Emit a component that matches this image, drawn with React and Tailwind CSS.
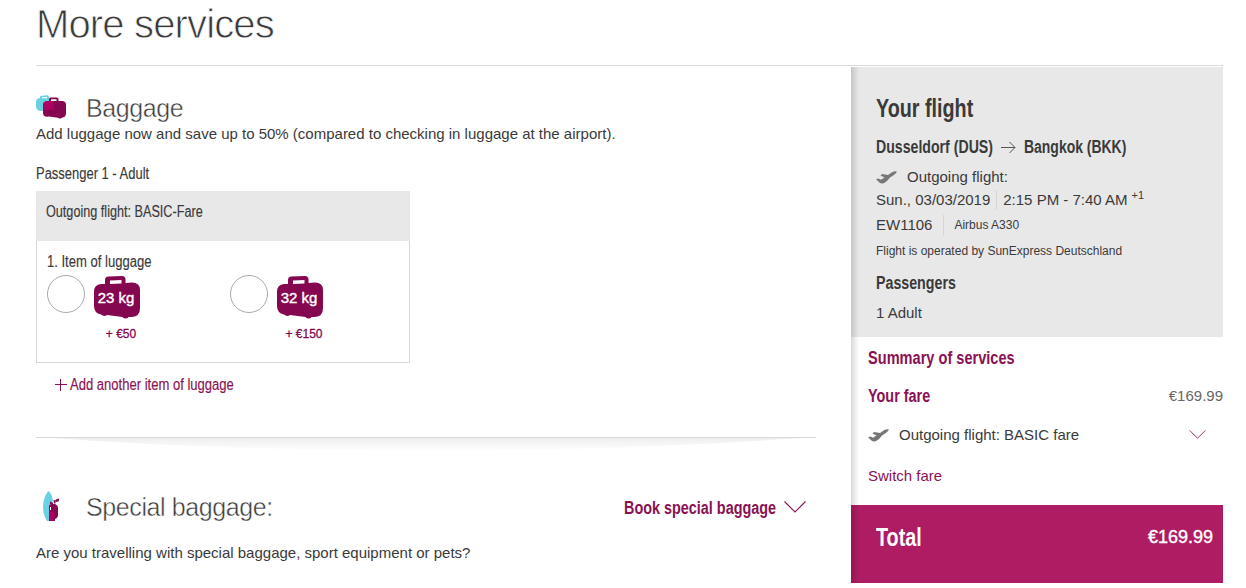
import React from "react";
import clsx from "clsx";

const luggageOptions = [
  { weight: "23 kg", price: "+ €50" },
  { weight: "32 kg", price: "+ €150" },
];

const Condensed = ({ children, className }) => (
  <span
    className={clsx(
      "inline-block whitespace-nowrap",
      className || "origin-left scale-x-[0.79]"
    )}
  >
    {children}
  </span>
);

const Suitcase = ({ className, fill = "#85074f" }) => (
  <svg viewBox="0 0 46 42" className={className} fill={fill}>
    <path
      fillRule="evenodd"
      d="M11 8V4Q11 .5 14.500.5L28 0Q31.500 0 31.500 3.500V7L38 6.500Q46 6.500 46 14V32Q46 40.500 38 41H34.500Q34 42.500 31 42.500Q29 42 28.500 41L13 39Q10 41 7 38.500Q0 37 0 30V16Q0 8.500 7 8ZM16 8L27.500 7.500V4L16 4.500Z"
    />
  </svg>
);

const BaggageIcon = () => (
  <svg width="30" height="25" viewBox="0 0 30 25">
    <path
      fillRule="evenodd"
      fill="#69d2e2"
      d="M4 3V2Q4 .8 5.500.7L11.500.3Q13 .3 13 2V3H15V15L4 16Q0 15 0 11V7Q0 3.500 4 3ZM6 3.200H11V2H6Z"
    />
    <path
      fillRule="evenodd"
      fill="#85074f"
      d="M13 6V4Q13 2.500 14.500 2.500H21Q22.500 2.500 22.500 4V6H26Q30 6 30 10V18Q30 22 26.500 22.500Q24 24.500 22 22.700L13 21.500Q7 22.500 7 18V10Q7 6.500 11 6ZM15 6H20.500V4.200H15Z"
    />
    <path fill="#ad0062" d="M7 10Q7 6.500 11 6H18V14Q13 16 7 15Z" />
  </svg>
);

const SurfIcon = () => (
  <svg width="17" height="31" viewBox="0 0 17 31">
    <path fill="#69d2e2" d="M5.500 0Q10 3 10 14L8 30H4Q0 24 0 15Q1 4 5.500 0Z" />
    <path
      fill="#85074f"
      d="M6 16Q6 13 9 13H12Q15 14 15 17V25Q14 28 12 28V30H6Z"
    />
    <path fill="#ad0062" d="M6 16Q6 14 8 14V20L11 22V30H6Z" />
    <path
      fill="#85074f"
      d="M7 10.500L10 12V13H7ZM10.500 9L12.500 9.500V12.500H11ZM12 9.500L13 8.500L16 7.500V10L13.500 11Z"
    />
    <path stroke="#fff" strokeWidth="1" d="M7.500 16V19" />
  </svg>
);

const Plane = () => (
  <svg width="21" height="13" viewBox="0 0 21 13" fill="#777">
    <path d="M0 8.200L2.500 7.500L5 8.800L8.500 6.500L4.500 4.500L6 3L12 4L16 1.200Q18.500 0 21 .5Q20 2.500 17.500 4.200L14 6.500L11.500 9.500L9 11.500Q6.500 13 4 12Z" />
  </svg>
);

const ChevronDown = ({ className }) => (
  <svg
    viewBox="0 0 22 12"
    className={className}
    fill="none"
    stroke="#8a1253"
    strokeWidth="1.1"
  >
    <path d="M.5.5L11 11L21.500.5" />
  </svg>
);

const SectionTitle = ({ children }) => (
  <h2 className="text-[25px] leading-8 tracking-[-0.4px] [-webkit-text-stroke:0.45px_white]">
    {children}
  </h2>
);

const Baggage = () => (
  <section className="pt-[26px]">
    <div className="flex h-8">
      <div className="w-[50px] pt-[3px]">
        <BaggageIcon />
      </div>
      <SectionTitle>Baggage</SectionTitle>
    </div>
    <p className="leading-5">
      Add luggage now and save up to 50% (compared to checking in luggage at the
      airport).
    </p>
    <h3 className="mt-5 h-5 text-[16px] leading-5 [-webkit-text-stroke:0.15px]">
      <Condensed className="origin-left scale-x-[0.81]">
        Passenger 1 - Adult
      </Condensed>
    </h3>
    <div className="mt-[7px] h-[172px] w-[374px] border border-[#d9d9d9]">
      <div className="-mx-px -mt-px h-[50px] bg-[#e8e8e8] px-[10px] pt-[11px] text-[16px] leading-5 [-webkit-text-stroke:0.15px]">
        <Condensed>Outgoing flight: BASIC-Fare</Condensed>
      </div>
      <div className="px-[10px] pt-[11px]">
        <p className="h-5 text-[16px] leading-5 [-webkit-text-stroke:0.15px]">
          <Condensed className="origin-left scale-x-[0.815]">
            1. Item of luggage
          </Condensed>
        </p>
        <div className="mt-[3px] flex">
          {luggageOptions.map((option) => (
            <label key={option.weight} className="flex w-[183px] shrink-0">
              <span className="size-[38px] rounded-full border border-[#aaa]" />
              <span className="ml-[9px] flex w-[46px] flex-col items-center">
                <span className="relative mt-px h-[42px] w-[46px]">
                  <Suitcase className="h-[42px] w-[46px] overflow-visible" />
                  <span className="absolute top-3 right-0 left-[-2px] text-center leading-5 text-white [-webkit-text-stroke:0.4px]">
                    {option.weight}
                  </span>
                </span>
                <span className="mt-2 ml-2 text-[12px] leading-4 whitespace-nowrap text-[#85074f] [-webkit-text-stroke:0.3px]">
                  {option.price}
                </span>
              </span>
            </label>
          ))}
        </div>
      </div>
    </div>
    <button className="mt-3 ml-[19px] flex h-5 items-center text-[16px] leading-5 text-[#8a1253] [-webkit-text-stroke:0.15px]">
      <svg width="12" height="12" className="mr-[3px]" stroke="#8a1253">
        <path d="M0 5.500H12M5.500 0V12" />
      </svg>
      <Condensed className="origin-left scale-x-[0.815]">
        Add another item of luggage
      </Condensed>
    </button>
  </section>
);

const SpecialBaggage = () => (
  <section>
    <svg width="780" height="14" className="mt-[42px] block">
      <defs>
        <linearGradient id="fade" x1="0" y1="0" x2="0" y2="1">
          <stop offset="0" stopColor="#ededed" />
          <stop offset="1" stopColor="#fff" />
        </linearGradient>
      </defs>
      <path d="M0 0Q390 28 780 0Z" fill="url(#fade)" />
      <rect width="780" height="1" fill="#d9d9d9" />
    </svg>
    <div className="mt-[40px] flex h-8">
      <div className="w-[50px] pl-[7px]">
        <SurfIcon />
      </div>
      <SectionTitle>Special baggage:</SectionTitle>
      <button className="mr-[10px] ml-auto flex h-8 items-center text-[18px] font-bold text-[#8a1253]">
        <Condensed className="origin-right scale-x-[0.8] pt-[2px]">
          Book special baggage
        </Condensed>
        <ChevronDown className="ml-2 h-3 w-[22px]" />
      </button>
    </div>
    <p className="mt-5 leading-5">
      Are you travelling with special baggage, sport equipment or pets?
    </p>
  </section>
);

const FlightSummary = () => (
  <aside className="relative mt-px h-[516px] w-[372px]">
    <div className="h-[270px] bg-[#e8e8e8] px-[25px] pt-[27px]">
      <h2 className="h-7 text-[25px] leading-7 font-bold">
        <Condensed>Your flight</Condensed>
      </h2>
      <div className="mt-[15px] flex h-5 items-center text-[18px] leading-5 font-bold">
        <span className="w-[117px]">
          <Condensed className="origin-left scale-x-[0.785]">
            Dusseldorf (DUS)
          </Condensed>
        </span>
        <svg
          width="15"
          height="13"
          className="mx-2"
          fill="none"
          stroke="#555"
          strokeWidth="1"
        >
          <path d="M0 6.500H14M8.500 1L14 6.500L8.500 12" />
        </svg>
        <Condensed className="origin-left scale-x-[0.775]">
          Bangkok (BKK)
        </Condensed>
      </div>
      <div className="mt-[10px] flex items-center leading-5">
        <span className="mr-[10px]">
          <Plane />
        </span>
        Outgoing flight:
      </div>
      <div className="mt-[3px] flex leading-5">
        Sun., 03/03/2019
        <span className="mr-[6px] ml-[6px] w-px bg-[#d6d6d6]" />
        2:15 PM - 7:40 AM
        <span className="ml-1 text-[11px] leading-[11px]">+1</span>
      </div>
      <div className="mt-[5px] flex leading-5">
        EW1106
        <span className="mr-[10px] ml-[11px] w-px bg-[#d6d6d6]" />
        <span className="text-[12px] leading-[21px]">Airbus A330</span>
      </div>
      <p className="mt-[5px] text-[12px] leading-5">
        Flight is operated by SunExpress Deutschland
      </p>
      <h3 className="mt-3 h-5 text-[18px] leading-5 font-bold">
        <Condensed>Passengers</Condensed>
      </h3>
      <p className="mt-[10px] leading-5">1 Adult</p>
    </div>
    <div className="h-[168px] pt-[11px] pl-[17px]">
      <h3 className="h-5 text-[18px] leading-5 font-bold text-[#8a1253]">
        <Condensed className="origin-left scale-x-[0.81]">
          Summary of services
        </Condensed>
      </h3>
      <div className="mt-[18px] flex h-5 justify-between leading-5">
        <h3 className="text-[18px] leading-5 font-bold text-[#8a1253]">
          <Condensed className="origin-left scale-x-[0.8]">Your fare</Condensed>
        </h3>
        <span className="text-[#666]">€169.99</span>
      </div>
      <div className="mt-[19px] flex items-center leading-5">
        <span className="mr-[10px]">
          <Plane />
        </span>
        Outgoing flight: BASIC fare
        <ChevronDown className="mr-[17px] mb-px ml-auto h-[9px] w-[17px]" />
      </div>
      <a href="#" className="mt-[21px] block leading-5 text-[#8a1253]">
        Switch fare
      </a>
    </div>
    <div className="flex h-[78px] justify-between bg-[#ae1c63] pt-[18px] pr-[10px] pl-[25px] text-white">
      <span className="text-[25px] leading-7 font-bold">
        <Condensed>Total</Condensed>
      </span>
      <span className="text-[18px] leading-7 [-webkit-text-stroke:0.4px]">
        €169.99
      </span>
    </div>
    {/* inner shadow along the left edge */}
    <div className="absolute inset-y-0 left-0 w-2 bg-linear-to-r from-black/15 to-transparent" />
  </aside>
);

const App = () => {
  return (
    <div className="h-[588px] overflow-hidden bg-white pr-[23px] pl-9 font-['Liberation_Sans',Arial,sans-serif] text-[15px] text-[#3a3a3a]">
      <h1 className="h-[66px] border-b border-[#d9d9d9] text-[40px] leading-[48px] tracking-[-0.85px] [-webkit-text-stroke:0.8px_white]">
        More services
      </h1>
      <div className="flex justify-between">
        <main className="w-[780px]">
          <Baggage />
          <SpecialBaggage />
        </main>
        <FlightSummary />
      </div>
    </div>
  );
};

export default App;
